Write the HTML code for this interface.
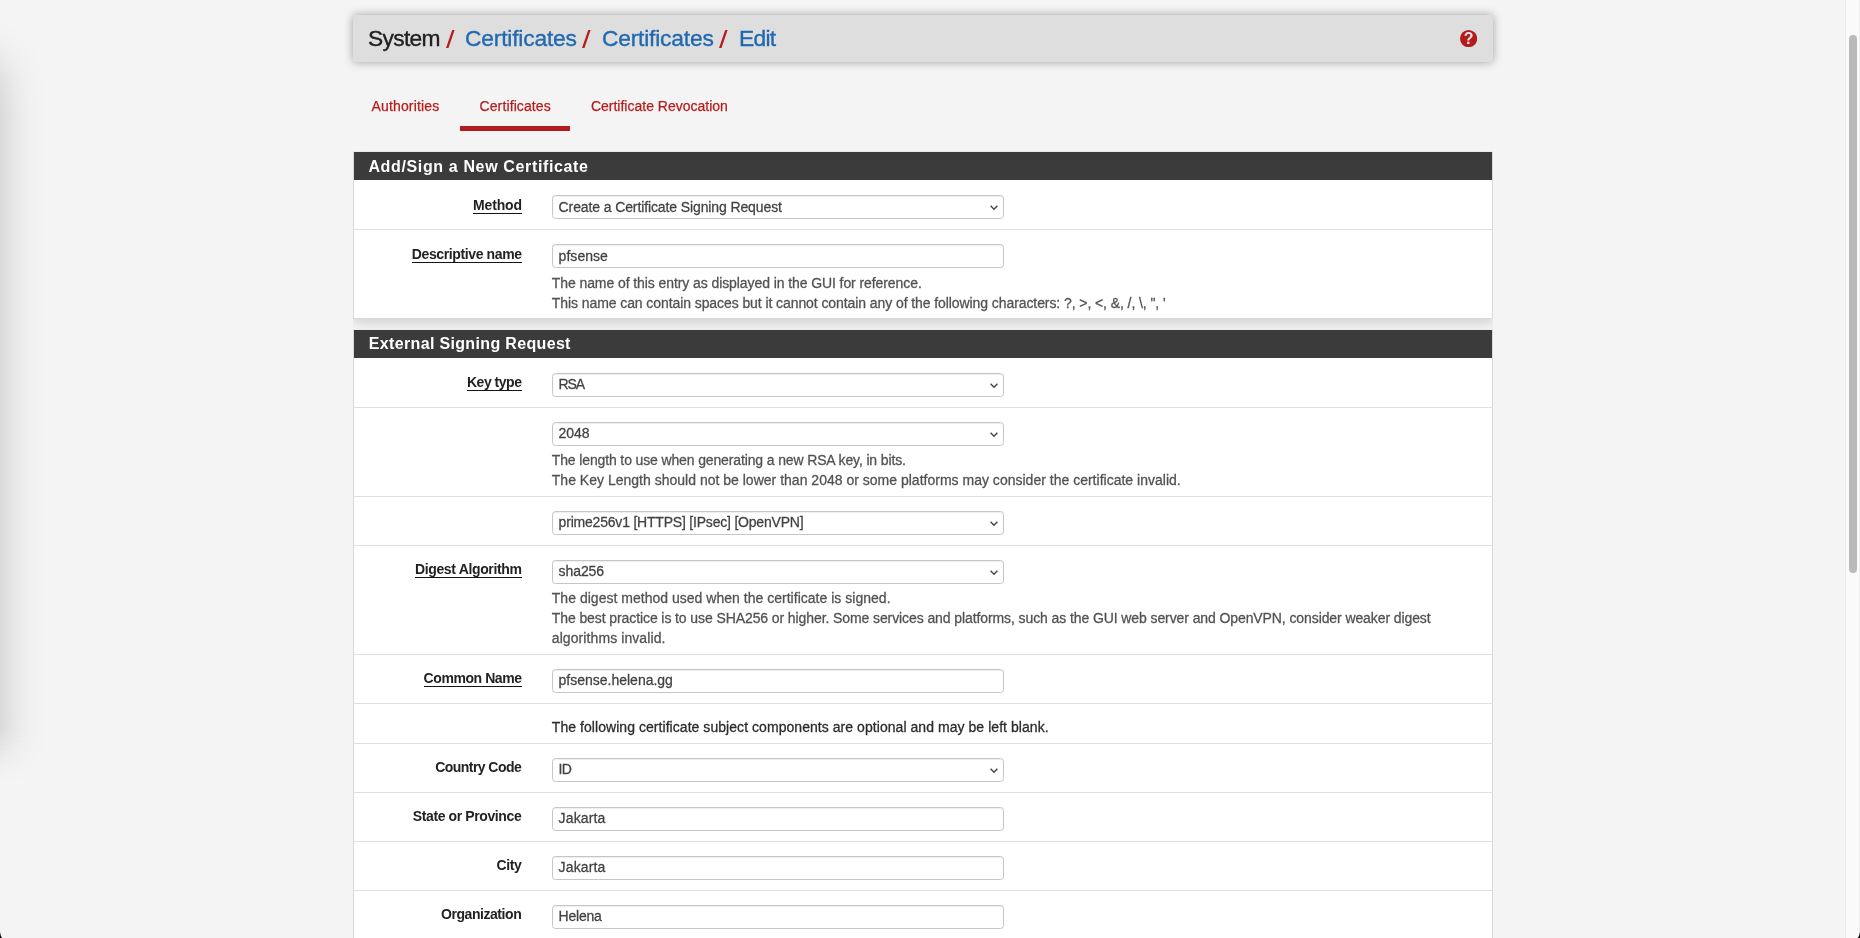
<!DOCTYPE html>
<html lang="en"><head><meta charset="utf-8"><title>pfSense - System: Certificates: Certificates: Edit</title>
<style>
html,body{margin:0;padding:0}
body{width:1860px;height:938px;overflow:hidden;position:relative;background:#f4f4f4;font-family:"Liberation Sans",sans-serif;color:#212121}
.t{position:absolute;white-space:nowrap;margin:0;padding:0}
.bc{font-size:22.8px;line-height:30px;color:#212121;-webkit-text-stroke:0.35px}
.red{color:#b71c1c}
.sl{transform-origin:0 75%;transform:translateY(1.6px) scale(1.36,1.08);-webkit-text-stroke:0}
.link{color:#2169b1}
.tab{font-size:14px;line-height:20px;color:#b71c1c;-webkit-text-stroke:0.25px}
.ph{font-size:16px;line-height:20px;font-weight:bold;color:#fff}
.lab{font-size:14px;line-height:20px;font-weight:bold;color:#222}
.req{height:18px;border-bottom:1px solid #151515}
.ct{font-size:14px;line-height:20px;color:#424242;-webkit-text-stroke:0.26px}
.hp{font-size:14px;line-height:20px;color:#525252;-webkit-text-stroke:0.28px}
.dark{color:#2b2b2b}
#page{position:absolute;left:0;top:0;width:1860px;height:938px;overflow:hidden;will-change:transform}
#leftshadow{position:absolute;left:-68px;top:66px;width:60px;height:704px;box-shadow:0 0 50px rgba(0,0,0,.295);background:rgba(0,0,0,.295)}
#lsmask{position:absolute;left:0;top:730px;width:70px;height:208px;background:linear-gradient(to bottom,rgba(244,244,244,0) 0,rgba(244,244,244,.5) 28px,#f4f4f4 56px,#f4f4f4 100%)}
#header{position:absolute;left:353px;top:15px;width:1140px;height:47px;background:#dedede;border-radius:3px;box-shadow:0 0 10px rgba(0,0,0,.35)}
#help{position:absolute;left:1460px;top:30.3px}
#tabline{position:absolute;left:460px;top:126px;width:110px;height:5px;background:#b11b1b}
#wrap{position:absolute;left:353px;top:140px;width:1140px;height:800px;overflow:hidden}
.panel{position:absolute;left:0;width:1138px;background:#fff;border:1px solid #d9d9d9;border-top-color:transparent;background-clip:padding-box;box-shadow:0 4px 10px rgba(0,0,0,.14);clip-path:inset(0 0 -20px 0)}
.phd{position:absolute;left:0;top:0;width:1138px;height:28px;background:#3b3b3b}
.rb{position:absolute;left:354px;width:1138px;height:1px;background:#dfdfdf}
.fc{position:absolute;left:552px;width:450px;height:22px;border:1px solid #c6c6c6;border-radius:3.5px;background:#fff;box-shadow:inset 0 1px 1px rgba(0,0,0,.07)}
.chev{position:absolute;left:437px;top:9px}
#sbtrack{position:absolute;left:1845px;top:0;width:13px;height:938px;background:#fafafa;border-left:1px solid #e8e8e8;border-right:1px solid #ededed}
#sbthumb{position:absolute;left:1849px;top:35px;width:8px;height:538px;border-radius:4px;background:#bababa}
.corner{position:absolute;bottom:0;width:8px;height:8px}
</style></head><body>
<div id="page">
<div id="leftshadow"></div>
<div id="lsmask"></div>
<div id="header"></div>
<svg id="help" width="17.2" height="17.2" viewBox="0 0 17.2 17.2"><circle cx="8.6" cy="8.6" r="8.6" fill="#b11b1b"/><text x="8.6" y="14.5" text-anchor="middle" font-family="Liberation Sans, sans-serif" font-weight="bold" font-size="16" fill="#ece4e4">?</text></svg>
<div id="tabline"></div>
<div id="wrap">
<div class="panel" style="top:11px;height:166px"><div class="phd"></div></div>
<div class="panel" style="top:189px;height:700px"><div class="phd"></div></div>
</div>

<div class="rb" style="top:229px"></div>
<div class="rb" style="top:407px"></div>
<div class="rb" style="top:496px"></div>
<div class="rb" style="top:545px"></div>
<div class="rb" style="top:654px"></div>
<div class="rb" style="top:703px"></div>
<div class="rb" style="top:743px"></div>
<div class="rb" style="top:792px"></div>
<div class="rb" style="top:841px"></div>
<div class="rb" style="top:890px"></div>
<div class="fc sel" style="top:195px"><svg class="chev" width="10" height="7" viewBox="0 0 10 7"><path d="M0.6 0.7 L4 4.3 L7.4 0.7" fill="none" stroke="#444" stroke-width="1.35" stroke-linecap="butt" stroke-linejoin="miter"/></svg></div>
<div class="fc" style="top:244px"></div>
<div class="fc sel" style="top:373px"><svg class="chev" width="10" height="7" viewBox="0 0 10 7"><path d="M0.6 0.7 L4 4.3 L7.4 0.7" fill="none" stroke="#444" stroke-width="1.35" stroke-linecap="butt" stroke-linejoin="miter"/></svg></div>
<div class="fc sel" style="top:422px"><svg class="chev" width="10" height="7" viewBox="0 0 10 7"><path d="M0.6 0.7 L4 4.3 L7.4 0.7" fill="none" stroke="#444" stroke-width="1.35" stroke-linecap="butt" stroke-linejoin="miter"/></svg></div>
<div class="fc sel" style="top:511px"><svg class="chev" width="10" height="7" viewBox="0 0 10 7"><path d="M0.6 0.7 L4 4.3 L7.4 0.7" fill="none" stroke="#444" stroke-width="1.35" stroke-linecap="butt" stroke-linejoin="miter"/></svg></div>
<div class="fc sel" style="top:560px"><svg class="chev" width="10" height="7" viewBox="0 0 10 7"><path d="M0.6 0.7 L4 4.3 L7.4 0.7" fill="none" stroke="#444" stroke-width="1.35" stroke-linecap="butt" stroke-linejoin="miter"/></svg></div>
<div class="fc" style="top:669px"></div>
<div class="fc sel" style="top:758px"><svg class="chev" width="10" height="7" viewBox="0 0 10 7"><path d="M0.6 0.7 L4 4.3 L7.4 0.7" fill="none" stroke="#444" stroke-width="1.35" stroke-linecap="butt" stroke-linejoin="miter"/></svg></div>
<div class="fc" style="top:807px"></div>
<div class="fc" style="top:856px"></div>
<div class="fc" style="top:905px"></div>
<span id="bc1" class="t bc" style="top:23px;left:368.0px;letter-spacing:-0.686px;">System</span>
<span id="bs1" class="t bc red sl" style="top:23px;left:445.8px;">/</span>
<a id="bc2" class="t bc link" style="top:23px;left:465.0px;letter-spacing:-0.186px;">Certificates</a>
<span id="bs2" class="t bc red sl" style="top:23px;left:582.4px;">/</span>
<a id="bc3" class="t bc link" style="top:23px;left:601.9px;letter-spacing:-0.186px;">Certificates</a>
<span id="bs3" class="t bc red sl" style="top:23px;left:719.3px;">/</span>
<a id="bc4" class="t bc link" style="top:23px;left:738.9px;letter-spacing:-0.699px;">Edit</a>
<a id="tab1" class="t tab" style="top:96px;left:371.5px;letter-spacing:0.149px;">Authorities</a>
<a id="tab2" class="t tab" style="top:96px;left:479.5px;letter-spacing:0.114px;">Certificates</a>
<a id="tab3" class="t tab" style="top:96px;left:590.9px;letter-spacing:0.002px;">Certificate Revocation</a>
<h2 id="ph1" class="t ph" style="top:157px;left:368.4px;letter-spacing:0.639px;">Add/Sign a New Certificate</h2>
<h2 id="ph2" class="t ph" style="top:334px;left:368.8px;letter-spacing:0.341px;">External Signing Request</h2>
<label id="l1" class="t lab req" style="top:195px;right:1338.14px;letter-spacing:-0.144px;">Method</label>
<label id="l2" class="t lab req" style="top:244px;right:1338.38px;letter-spacing:-0.385px;">Descriptive name</label>
<label id="l3" class="t lab req" style="top:372px;right:1338.47px;letter-spacing:-0.470px;">Key type</label>
<label id="l4" class="t lab req" style="top:559px;right:1338.34px;letter-spacing:-0.342px;">Digest Algorithm</label>
<label id="l5" class="t lab req" style="top:668px;right:1338.43px;letter-spacing:-0.426px;">Common Name</label>
<label id="l6" class="t lab" style="top:757px;right:1338.86px;letter-spacing:-0.555px;">Country Code</label>
<label id="l7" class="t lab" style="top:806px;right:1338.69px;letter-spacing:-0.392px;">State or Province</label>
<label id="l8" class="t lab" style="top:855px;right:1338.74px;letter-spacing:-0.438px;">City</label>
<label id="l9" class="t lab" style="top:904px;right:1338.74px;letter-spacing:-0.439px;">Organization</label>
<span id="c1" class="t ct" style="top:197px;left:558.6px;letter-spacing:-0.112px;">Create a Certificate Signing Request</span>
<span id="c2" class="t ct" style="top:246px;left:558.6px;letter-spacing:0.036px;">pfsense</span>
<span id="c3" class="t ct" style="top:374px;left:558.6px;letter-spacing:-1.166px;">RSA</span>
<span id="c4" class="t ct" style="top:423px;left:558.6px;letter-spacing:-0.089px;">2048</span>
<span id="c5" class="t ct" style="top:512px;left:558.6px;letter-spacing:-0.203px;">prime256v1 [HTTPS] [IPsec] [OpenVPN]</span>
<span id="c6" class="t ct" style="top:561px;left:558.6px;letter-spacing:-0.090px;">sha256</span>
<span id="c7" class="t ct" style="top:670px;left:558.6px;letter-spacing:-0.008px;">pfsense.helena.gg</span>
<span id="c8" class="t ct" style="top:759px;left:558.6px;letter-spacing:-0.800px;">ID</span>
<span id="c9" class="t ct" style="top:808px;left:558.6px;letter-spacing:0.140px;">Jakarta</span>
<span id="c10" class="t ct" style="top:857px;left:558.6px;letter-spacing:0.140px;">Jakarta</span>
<span id="c11" class="t ct" style="top:906px;left:558.6px;letter-spacing:-0.212px;">Helena</span>
<span id="h1" class="t hp" style="top:273px;left:551.8px;letter-spacing:-0.085px;">The name of this entry as displayed in the GUI for reference.</span>
<span id="h2" class="t hp" style="top:293px;left:551.8px;letter-spacing:-0.082px;">This name can contain spaces but it cannot contain any of the following characters: ?, &gt;, &lt;, &amp;, /, \, ", '</span>
<span id="h3" class="t hp" style="top:450px;left:551.8px;letter-spacing:-0.134px;">The length to use when generating a new RSA key, in bits.</span>
<span id="h4" class="t hp" style="top:470px;left:551.8px;letter-spacing:0.009px;">The Key Length should not be lower than 2048 or some platforms may consider the certificate invalid.</span>
<span id="h5" class="t hp" style="top:588px;left:551.8px;letter-spacing:0.019px;">The digest method used when the certificate is signed.</span>
<span id="h6" class="t hp" style="top:608px;left:551.8px;letter-spacing:-0.095px;">The best practice is to use SHA256 or higher. Some services and platforms, such as the GUI web server and OpenVPN, consider weaker digest</span>
<span id="h7" class="t hp" style="top:628px;left:551.8px;letter-spacing:0.086px;">algorithms invalid.</span>
<span id="h8" class="t hp dark" style="top:717px;left:551.8px;letter-spacing:0.053px;">The following certificate subject components are optional and may be left blank.</span>
<div id="sbtrack"></div><div id="sbthumb"></div>
<svg class="corner" style="left:0" width="8" height="8" viewBox="0 0 8 8"><path d="M0 2 Q0.5 6.2 2.1 8 L0 8 Z" fill="#000"/></svg>
<svg class="corner" style="right:0" width="8" height="8" viewBox="0 0 8 8"><path d="M8 2 Q7.4 6.4 5.6 8 L8 8 Z" fill="#000"/></svg>
</div>
</body></html>
